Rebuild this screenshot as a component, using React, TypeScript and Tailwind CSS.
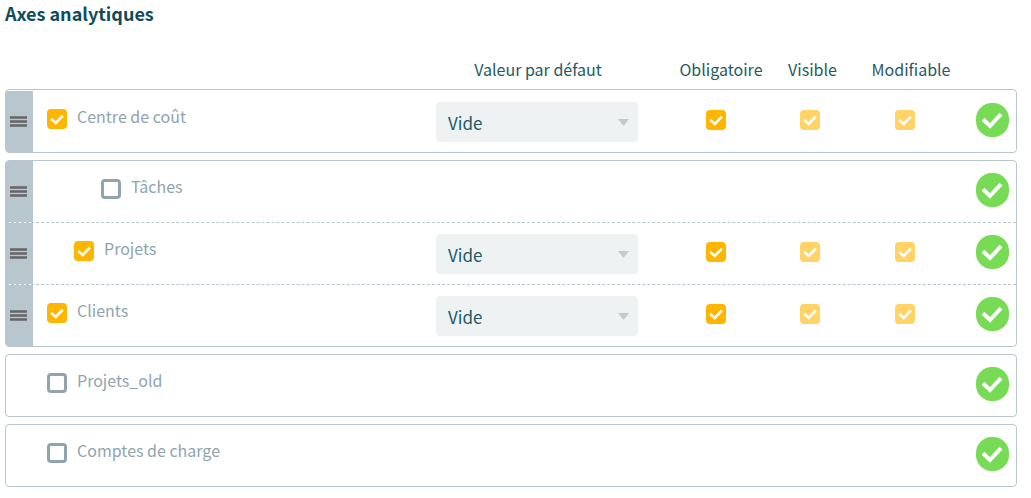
import { useState } from 'react';

type Options = {
  required: boolean;
  visible: boolean;
  editable: boolean;
};

type Axis = {
  id: string;
  label: string;
  level: number;
  active: boolean;
  options?: Options;
};

type AxisGroup = {
  id: string;
  draggable: boolean;
  axes: Axis[];
};

const defaults: Options = { required: true, visible: true, editable: true };

const groups: AxisGroup[] = [
  {
    id: 'cost',
    draggable: true,
    axes: [{ id: 'cost-center', label: 'Centre de coût', level: 0, active: true, options: defaults }],
  },
  {
    id: 'clients',
    draggable: true,
    axes: [
      { id: 'tasks', label: 'Tâches', level: 2, active: false },
      { id: 'projects', label: 'Projets', level: 1, active: true, options: defaults },
      { id: 'customers', label: 'Clients', level: 0, active: true, options: defaults },
    ],
  },
  {
    id: 'old',
    draggable: false,
    axes: [{ id: 'projects-old', label: 'Projets_old', level: 0, active: false }],
  },
  {
    id: 'charges',
    draggable: false,
    axes: [{ id: 'charge-accounts', label: 'Comptes de charge', level: 0, active: false }],
  },
];

const indents = ['pl-[14px]', 'pl-[41px]', 'pl-[68px]'];

const columns = 'grid grid-cols-[27px_1fr_202px_31px_94px_94px_96px_63px]';

type CheckboxProps = {
  id: string;
  defaultChecked: boolean;
  label?: string;
  disabled?: boolean;
};

const Checkbox = ({ id, defaultChecked, label, disabled }: CheckboxProps) => {
  const [checked, setChecked] = useState(defaultChecked);

  return (
    <span className={`grid size-5 shrink-0 ${disabled ? 'opacity-60' : ''}`}>
      <input
        id={id}
        type="checkbox"
        aria-label={label}
        checked={checked}
        disabled={disabled}
        onChange={(e) => setChecked(e.target.checked)}
        className="col-start-1 row-start-1 size-5 appearance-none rounded border-3 border-[#90a4ae] bg-white checked:border-[#ffb600] checked:bg-[#ffb600]"
      />
      {checked && (
        <svg viewBox="0 0 20 20" className="pointer-events-none col-start-1 row-start-1 size-5" aria-hidden="true">
          <path d="M4.2 10 L8.8 14 L15.8 6.6" fill="none" stroke="#fff" strokeWidth="2.6" />
        </svg>
      )}
    </span>
  );
};

const DragHandle = ({ label }: { label: string }) => (
  <button type="button" aria-label={`Déplacer ${label}`} className="flex cursor-move items-center bg-[#b8c6cd] pl-1">
    <svg width="17" height="11" viewBox="0 0 17 11" aria-hidden="true">
      <path d="M0 1.5 H17 M0 5.5 H17 M0 9.5 H17" stroke="#666" strokeWidth="2.6" />
    </svg>
  </button>
);

const StatusButton = ({ label }: { label: string }) => (
  <button type="button" aria-label={`Valider ${label}`} className="h-[34px] w-[33px]">
    <svg width="33" height="34" viewBox="0 0 33 34" aria-hidden="true">
      <rect width="33" height="34" rx="15.5" ry="16" fill="#77db55" />
      <path d="M7 16.3 L14 23 L25 11.2" fill="none" stroke="#fff" strokeWidth="4" />
    </svg>
  </button>
);

const DefaultValue = ({ label }: { label: string }) => (
  <div className="mt-[11px] grid h-10">
    <select
      aria-label={`Valeur par défaut ${label}`}
      className="col-start-1 row-start-1 h-10 w-full appearance-none rounded bg-[#eef2f3] px-3 pt-px text-[17px] text-[#1f5a66]"
    >
      <option>Vide</option>
    </select>
    <svg
      width="11"
      height="7"
      viewBox="0 0 11 7"
      className="pointer-events-none col-start-1 row-start-1 mt-[17px] mr-[9px] justify-self-end"
      aria-hidden="true"
    >
      <path d="M0 0 H11 L5.5 7 Z" fill="#c8c8c8" />
    </svg>
  </div>
);

const AxisRow = ({ axis, draggable }: { axis: Axis; draggable: boolean }) => (
  <div className={`${columns} h-[61px]`}>
    {draggable ? <DragHandle label={axis.label} /> : <span />}
    <div className={`flex items-start gap-[10px] pt-[18px] ${indents[axis.level]}`}>
      <Checkbox id={axis.id} defaultChecked={axis.active} />
      <label htmlFor={axis.id} className="text-base leading-[14px] text-[#90a4ae]">
        {axis.label}
      </label>
    </div>
    {axis.options && (
      <>
        <DefaultValue label={axis.label} />
        <div className="col-start-5 flex justify-center pt-[19px]">
          <Checkbox id={`${axis.id}-required`} label={`Obligatoire ${axis.label}`} defaultChecked={axis.options.required} />
        </div>
        <div className="flex justify-center pt-[19px]">
          <Checkbox id={`${axis.id}-visible`} label={`Visible ${axis.label}`} defaultChecked={axis.options.visible} disabled />
        </div>
        <div className="flex justify-center pt-[19px]">
          <Checkbox id={`${axis.id}-editable`} label={`Modifiable ${axis.label}`} defaultChecked={axis.options.editable} disabled />
        </div>
      </>
    )}
    <div className="col-start-8 flex items-start justify-end pt-3 pr-[7px]">
      <StatusButton label={axis.label} />
    </div>
  </div>
);

const App = () => {
  return (
    <main className="bg-white pr-[14px] pb-3 pl-[5px] font-['Noto_Sans_CJK_SC','Open_Sans',sans-serif]">
      <h1 className="text-lg leading-[26px] font-bold text-[#0f4c59]">Axes analytiques</h1>
      <div className={`${columns} mt-7 h-[35px] px-px text-center text-base leading-[30px] text-[#1f5a66]`}>
        <span className="col-start-3 pl-[2px]">Valeur par défaut</span>
        <span className="col-start-5 pl-[10px] whitespace-nowrap">Obligatoire</span>
        <span className="pl-[5px]">Visible</span>
        <span className="pl-3">Modifiable</span>
      </div>
      <div className="flex flex-col gap-[7px]">
        {groups.map((group) => (
          <section
            key={group.id}
            className="divide-y divide-dashed divide-[#b8c6cd] overflow-hidden rounded border border-[#b8c6cd] first:pt-px"
          >
            {group.axes.map((axis) => (
              <div key={axis.id}>
                <AxisRow axis={axis} draggable={group.draggable} />
              </div>
            ))}
          </section>
        ))}
      </div>
    </main>
  );
};

export default App;
